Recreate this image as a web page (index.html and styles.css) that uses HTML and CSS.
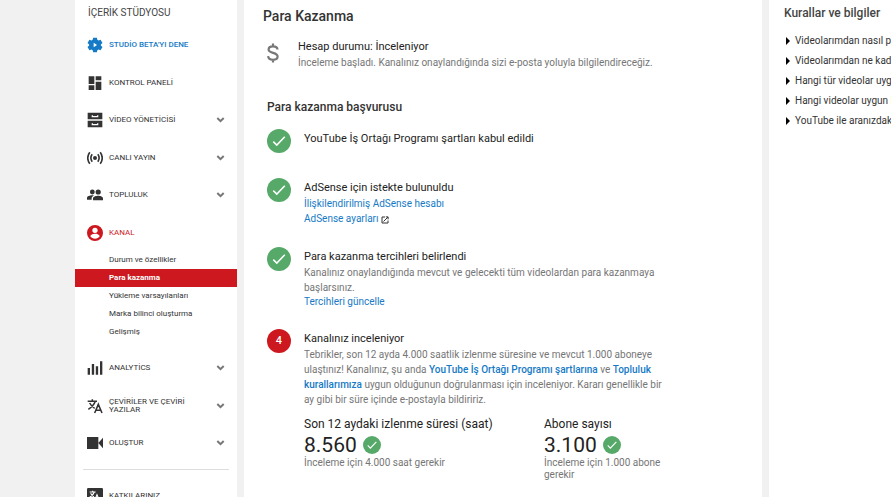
FILE: index.html
```
<!DOCTYPE html>
<html lang="tr">
<head>
<meta charset="utf-8">
<title>Para Kazanma</title>
<link rel="stylesheet" href="styles.css">
</head>
<body>
<svg class="defs" aria-hidden="true">
  <symbol id="chevron" viewBox="0 0 8 6"><path d="M.8 1 4 4.2 7.2 1" fill="none" stroke="#777" stroke-width="2"/></symbol>
  <symbol id="check" viewBox="0 0 24 24"><circle cx="12" cy="12" r="12" fill="#57a969"/><path d="m6.300 12.600 3.500 3.500 8-8.300" fill="none" stroke="#fff" stroke-width="1.500"/></symbol>
</svg>
<div class="layout">
  <nav class="sidebar" aria-label="İçerik Stüdyosu">
    <h2 class="sidebar-title">İÇERİK STÜDYOSU</h2>
    <ul class="nav">
      <li><a class="nav-link beta" href="#"><svg class="icon" viewBox="0 0 24 24"><path fill-rule="evenodd" d="M9.200 1h5.600l.7 3.100 1.700 1 3.200-1 2.800 4.800-2.400 2.200v1.800l2.400 2.200-2.800 4.800-3.200-1-1.700 1-.7 3.100H9.200l-.7-3.100-1.700-1-3.200 1L.8 15.100l2.400-2.200v-1.800L.8 8.900l2.800-4.800 3.200 1 1.700-1zM10 8.500v7l5-3.500z"/></svg><span>STUDİO BETA'YI DENE</span></a></li>
      <li><a class="nav-link" href="#"><svg class="icon" viewBox="0 0 24 24"><path d="M2.500 2h8.500v11.500H2.500zM13 2h8.500v6H13zM2.500 15.500H11v7H2.500zM13 10h8.500v12.500H13z"/></svg><span>KONTROL PANELİ</span></a></li>
      <li><a class="nav-link" href="#"><svg class="icon" viewBox="0 0 24 24"><path fill-rule="evenodd" d="M1 1h22v10H1zm6 4v3h10V5h-2v1H9V5zM1 13h22v10H1zm6 4v3h10v-3h-2v1H9v-1z"/></svg><span>VİDEO YÖNETİCİSİ</span><svg class="chevron"><use href="#chevron"/></svg></a></li>
      <li><a class="nav-link" href="#"><svg class="icon" viewBox="0 0 24 24"><circle cx="12" cy="12" r="3"/><path d="M7.800 6.500q-4 5.500 0 11M16.200 6.500q4 5.500 0 11M4.200 3.500q-6.200 8.500 0 17M19.800 3.500q6.200 8.500 0 17" fill="none" stroke="currentColor" stroke-width="2.400"/></svg><span>CANLI YAYIN</span><svg class="chevron"><use href="#chevron"/></svg></a></li>
      <li><a class="nav-link" href="#"><svg class="icon" viewBox="0 0 24 24"><circle cx="8" cy="7.500" r="3.600"/><circle cx="16.800" cy="7.500" r="3.900"/><path d="M0 19v-2.500C0 14 4 12.500 8 12.500c1 0 1.500.1 2.300.3C8 14 7 15.500 7 17v2zM9 20v-2.800c0-2.700 4.500-4 7.700-4s7.300 1.300 7.300 4V20z"/></svg><span>TOPLULUK</span><svg class="chevron"><use href="#chevron"/></svg></a></li>
      <li><a class="nav-link current" href="#"><svg class="icon" viewBox="0 0 24 24"><path fill-rule="evenodd" d="M12 0a12 12 0 1 0 0 24 12 12 0 0 0 0-24zm0 4a4 4 0 1 1 0 8 4 4 0 0 1 0-8zM5 17c0-2.500 4.500-3.800 7-3.800s7 1.300 7 3.800c-1.500 2.300-4.100 3.600-7 3.600S6.500 19.300 5 17z"/></svg><span>KANAL</span></a></li>
    </ul>
    <ul class="subnav">
      <li><a href="#">Durum ve özellikler</a></li>
      <li><a class="selected" href="#" aria-current="page">Para kazanma</a></li>
      <li><a href="#">Yükleme varsayılanları</a></li>
      <li><a href="#">Marka bilinci oluşturma</a></li>
      <li><a href="#">Gelişmiş</a></li>
    </ul>
    <ul class="nav">
      <li><a class="nav-link" href="#"><svg class="icon" viewBox="0 0 24 24"><path d="M1 12h3.500v10H1zM7.200 6h3.500v16H7.200zM13.200 9.500h3.500V22h-3.500zM19.500 2H23v20h-3.500z"/></svg><span>ANALYTİCS</span><svg class="chevron"><use href="#chevron"/></svg></a></li>
      <li><a class="nav-link" href="#"><svg class="icon" viewBox="0 0 24 24"><path d="M1 5h14M8 2v3M12.500 5Q10 12 2 17M4 7.500Q6.500 12.500 11.500 15.500M11.500 22.500 17 9.500l5.500 13M13.500 18.500h7" fill="none" stroke="currentColor" stroke-width="2.300"/></svg><span>ÇEVİRİLER VE ÇEVİRİ YAZILAR</span><svg class="chevron"><use href="#chevron"/></svg></a></li>
      <li><a class="nav-link" href="#"><svg class="icon" viewBox="0 0 24 24"><path d="M0 3h17v18H0zM17 12l7-8v16z"/></svg><span>OLUŞTUR</span><svg class="chevron"><use href="#chevron"/></svg></a></li>
    </ul>
    <hr class="divider">
    <ul class="nav">
      <li><a class="nav-link" href="#"><svg class="icon" viewBox="0 0 24 24"><rect width="24" height="24" rx="2"/><path d="M4 6h9M8.500 4v2M11 6q-2 5-7 8M5.500 8q2 4 5 5M11 20l4-10 4 10M12.500 17h5" fill="none" stroke="#fff" stroke-width="1.700"/></svg><span>KATKILARINIZ</span></a></li>
    </ul>
  </nav>

  <main class="main">
    <h1 class="page-title">Para Kazanma</h1>
    <section class="status">
      <svg class="dollar" viewBox="0 0 12 20" aria-hidden="true"><path d="M10.500 6.500C10.300 4.400 8.600 3.300 6 3.300S1.600 4.600 1.600 6.500c0 4.300 9 2.500 9 7 0 2-1.800 3.300-4.600 3.300s-4.700-1.300-4.900-3.600M6 .5v3M6 16.500v3" fill="none" stroke="#777" stroke-width="2.200"/></svg>
      <div>
        <h2 class="item-title">Hesap durumu: İnceleniyor</h2>
        <p>İnceleme başladı. Kanalınız onaylandığında sizi e-posta yoluyla bilgilendireceğiz.</p>
      </div>
    </section>
    <h2 class="section-title">Para kazanma başvurusu</h2>
    <ol class="steps">
      <li class="step">
        <svg class="badge"><use href="#check"/></svg>
        <div class="step-body"><h3 class="item-title">YouTube İş Ortağı Programı şartları kabul edildi</h3></div>
      </li>
      <li class="step">
        <svg class="badge"><use href="#check"/></svg>
        <div class="step-body">
          <h3 class="item-title">AdSense için istekte bulunuldu</h3>
          <p><a href="#">İlişkilendirilmiş AdSense hesabı</a></p>
          <p><a href="#">AdSense ayarları <svg class="external" viewBox="0 0 8 8"><path d="M4 1H1v6h6V4.500M2.500 5.500 6.800 1.200M4.800.9H7.100V3.300" fill="none" stroke="#333" stroke-width="1"/></svg></a></p>
        </div>
      </li>
      <li class="step">
        <svg class="badge"><use href="#check"/></svg>
        <div class="step-body">
          <h3 class="item-title">Para kazanma tercihleri belirlendi</h3>
          <p>Kanalınız onaylandığında mevcut ve gelecekti tüm videolardan para kazanmaya başlarsınız.</p>
          <a class="action" href="#">Tercihleri güncelle</a>
        </div>
      </li>
      <li class="step">
        <span class="badge number">4</span>
        <div class="step-body">
          <h3 class="item-title">Kanalınız inceleniyor</h3>
          <p>Tebrikler, son 12 ayda 4.000 saatlik izlenme süresine ve mevcut 1.000 aboneye ulaştınız! Kanalınız, şu anda <a class="strong" href="#">YouTube İş Ortağı Programı şartlarına</a> ve <a class="strong" href="#">Topluluk kurallarımıza</a> uygun olduğunun doğrulanması için inceleniyor. Kararı genellikle bir ay gibi bir süre içinde e-postayla bildiririz.</p>
          <div class="stats">
            <div>
              <h4 class="stat-label">Son 12 aydaki izlenme süresi (saat)</h4>
              <div class="stat-value">8.560 <svg class="stat-check"><use href="#check"/></svg></div>
              <p class="stat-note">İnceleme için 4.000 saat gerekir</p>
            </div>
            <div>
              <h4 class="stat-label">Abone sayısı</h4>
              <div class="stat-value">3.100 <svg class="stat-check"><use href="#check"/></svg></div>
              <p class="stat-note">İnceleme için 1.000 abone gerekir</p>
            </div>
          </div>
        </div>
      </li>
    </ol>
  </main>

  <aside class="rules">
    <h2 class="rules-title">Kurallar ve bilgiler</h2>
    <ul class="rules-list">
      <li><a href="#">Videolarımdan nasıl para kazanabilirim?</a></li>
      <li><a href="#">Videolarımdan ne kadar kazanırım?</a></li>
      <li><a href="#">Hangi tür videolar uygundur?</a></li>
      <li><a href="#">Hangi videolar uygun Değildir?</a></li>
      <li><a href="#">YouTube ile aranızdaki sözleşme</a></li>
    </ul>
  </aside>
</div>
</body>
</html>
```
FILE: styles.css
```
* { box-sizing: border-box; }
body {
  margin: 0;
  background: #f1f1f1;
  color: #222;
  font: 10px/15px Roboto, sans-serif;
}
h1, h2, h3, h4, p, ul, ol { margin: 0; padding: 0; }
ul, ol { list-style: none; }
a { color: #167ac6; text-decoration: none; }
.defs { display: none; }

.layout {
  display: grid;
  grid-template-columns: 162px minmax(0, 1fr) 122px;
  gap: 7px;
  height: 100vh;
  padding-left: 75px;
  overflow: hidden;
}
.sidebar, .main, .rules { background: #fff; }

.sidebar-title {
  height: 26px;
  padding-left: 13px;
  color: #444;
  font-size: 10px;
  font-weight: 400;
  line-height: 26px;
}
.nav { display: grid; grid-auto-rows: 38px 37px; }
.nav-link {
  display: flex;
  align-items: center;
  gap: 6px;
  height: 100%;
  padding: 0 12px;
  color: #333;
  font-size: 8px;
  line-height: 8px;
}
.nav-link span { flex: 1; }
.beta { color: #167ac6; font-weight: 500; }
.current { color: #cc181e; }
.icon { flex: none; width: 16px; height: 16px; fill: currentColor; }
.chevron { flex: none; width: 9px; height: 6px; }
.subnav { margin-bottom: 8px; font-size: 8px; line-height: 18px; }
.subnav a { display: block; padding-left: 34px; color: #333; }
.subnav .selected { background: #cc181e; color: #fff; font-weight: 700; }
.divider {
  height: 1px;
  margin: 7px 8px;
  border: 0;
  background: #ddd;
}

.main { padding: 6px 19px 0; }
.page-title {
  color: #333;
  font-size: 14px;
  font-weight: 500;
  line-height: 20px;
}
.status { display: flex; gap: 19px; padding: 13px 4px 0; }
.status p, .step p { color: #767676; }
.dollar { width: 12px; height: 20px; margin-top: 4px; }
.item-title { font-size: 11px; font-weight: 400; line-height: 16px; }
.section-title {
  margin: 28px 4px 13px;
  color: #333;
  font-size: 12px;
  font-weight: 500;
  line-height: 18px;
}
.steps { display: grid; gap: 21px; padding-left: 4px; }
.step { display: flex; gap: 13px; min-height: 28px; }
.badge { flex: none; width: 24px; height: 24px; }
.number {
  border-radius: 50%;
  background: #cc181e;
  color: #fff;
  font-size: 11px;
  font-weight: 500;
  line-height: 24px;
  text-align: center;
}
.step-body { max-width: 360px; padding-top: 2px; }
.step .step-body p a { color: #167ac6; }
.strong { font-weight: 500; }
.external { width: 8px; height: 8px; vertical-align: -2px; }
.action { display: block; line-height: 13px; }
.stats { display: grid; grid-template-columns: 240px 120px; margin-top: 8px; }
.stat-label { font-size: 12px; font-weight: 400; line-height: 18px; }
.stat-value {
  display: flex;
  align-items: center;
  gap: 6px;
  font-size: 21px;
  line-height: 24px;
}
.stat-check { width: 18px; height: 18px; }
.step .stat-note { line-height: 12px; }

.rules { padding: 4px 0 0 15px; overflow: hidden; white-space: nowrap; }
.rules-title {
  margin-bottom: 9px;
  color: #444;
  font-size: 12px;
  font-weight: 500;
  line-height: 18px;
}
.rules-list { line-height: 20px; }
.rules-list a { display: flex; align-items: center; gap: 5px; padding-left: 2px; color: #333; }
.rules-list a::before {
  border: 4px solid transparent;
  border-right: 0;
  border-left: 4px solid #000;
  content: "";
}
```
